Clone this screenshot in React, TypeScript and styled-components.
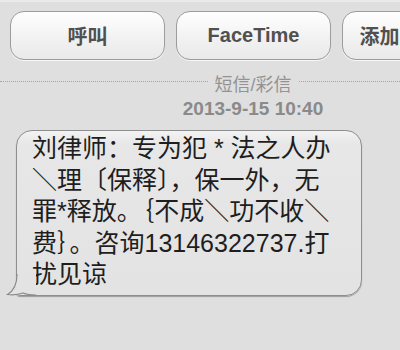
import styled, { createGlobalStyle } from "styled-components";

const GlobalStyle = createGlobalStyle`
  body {
    margin: 0;
    background: #dfdfdf;
    font-family: "Liberation Sans", "Noto Sans CJK SC", sans-serif;
  }
`;

const Screen = styled.div`
  width: 400px;
  height: 350px;
  overflow: hidden;
  background: #dfdfdf;
  border-top: 2px solid #eaeaea;
  box-sizing: border-box;
`;

const Toolbar = styled.div`
  display: flex;
  gap: 11px;
  padding: 9px 0 0 10px;
`;

const ActionButton = styled.div`
  flex-shrink: 0;
  width: 155px;
  height: 49px;
  box-sizing: border-box;
  border: 1px solid #9c9c9c;
  border-radius: 14px;
  background: linear-gradient(#fefefe, #f1f1f1 60%, #e9e9e9);
  box-shadow: 0 1px 0 rgba(255, 255, 255, 0.7);
  display: flex;
  align-items: center;
  justify-content: center;
  padding-bottom: 1px;
  font-size: 20px;
  font-weight: bold;
  color: #505050;
`;

const Header = styled.div`
  width: 506px;
  margin-top: 14px;
  display: flex;
  flex-direction: column;
  align-items: center;
`;

const DividerRow = styled.div`
  width: 100%;
  display: flex;
  align-items: center;
  gap: 7px;
`;

const Dots = styled.div`
  flex: 1;
  margin-bottom: 7px;
  border-top: 1px dotted #a5a5a5;
`;

const Label = styled.span`
  font-size: 18px;
  color: #939393;
  line-height: 22px;
`;

const Stamp = styled.div`
  margin-top: 2px;
  font-size: 19px;
  font-weight: bold;
  color: #8a8a8a;
  line-height: 22px;
`;

const Bubble = styled.div`
  position: relative;
  margin: 10px 0 0 16px;
  width: 346px;
  box-sizing: border-box;
  padding: 2px 10px 4px 15px;
  border: 1px solid #8e8e8e;
  border-radius: 16px;
  border-bottom-left-radius: 4px;
  background: linear-gradient(#f3f3f3 0, #e7e7e7 13px, #e3e3e3 100%);
  box-shadow: 0 1px 1px rgba(0, 0, 0, 0.3);
`;

const Line = styled.div`
  font-size: 25px;
  line-height: 31.5px;
  color: #1e1e1e;
  white-space: nowrap;
`;

const Tail = styled.svg`
  position: absolute;
  left: -11px;
  bottom: -2px;
`;

const lines = [
  "刘律师：专为犯 * 法之人办",
  "＼理〔保释〕，保一外，无",
  "罪*释放。｛不成＼功不收＼",
  "费｝。咨询13146322737.打",
  "扰见谅",
];

function App() {
  return (
    <Screen>
      <GlobalStyle />
      <Toolbar>
        <ActionButton>呼叫</ActionButton>
        <ActionButton>FaceTime</ActionButton>
        <ActionButton>添加到联系人</ActionButton>
      </Toolbar>
      <Header>
        <DividerRow>
          <Dots />
          <Label>短信/彩信</Label>
          <Dots />
        </DividerRow>
        <Stamp>2013-9-15 10:40</Stamp>
      </Header>
      <Bubble>
        {lines.map((l) => (
          <Line key={l}>{l}</Line>
        ))}
        <Tail width="30" height="24" viewBox="0 0 30 24">
          <path d="M11 1 Q11 16 1.5 21.5 Q10 22.5 17 20 Q22 22 30 22 L30 0 L11 0 Z" fill="#e3e3e3" />
          <path
            d="M11 1 Q11 16 1.5 21.5 Q10 22.5 17 20 Q22 22 30 22"
            fill="none"
            stroke="#8a8a8a"
            strokeWidth="1.2"
          />
        </Tail>
      </Bubble>
    </Screen>
  );
}

export default App;
